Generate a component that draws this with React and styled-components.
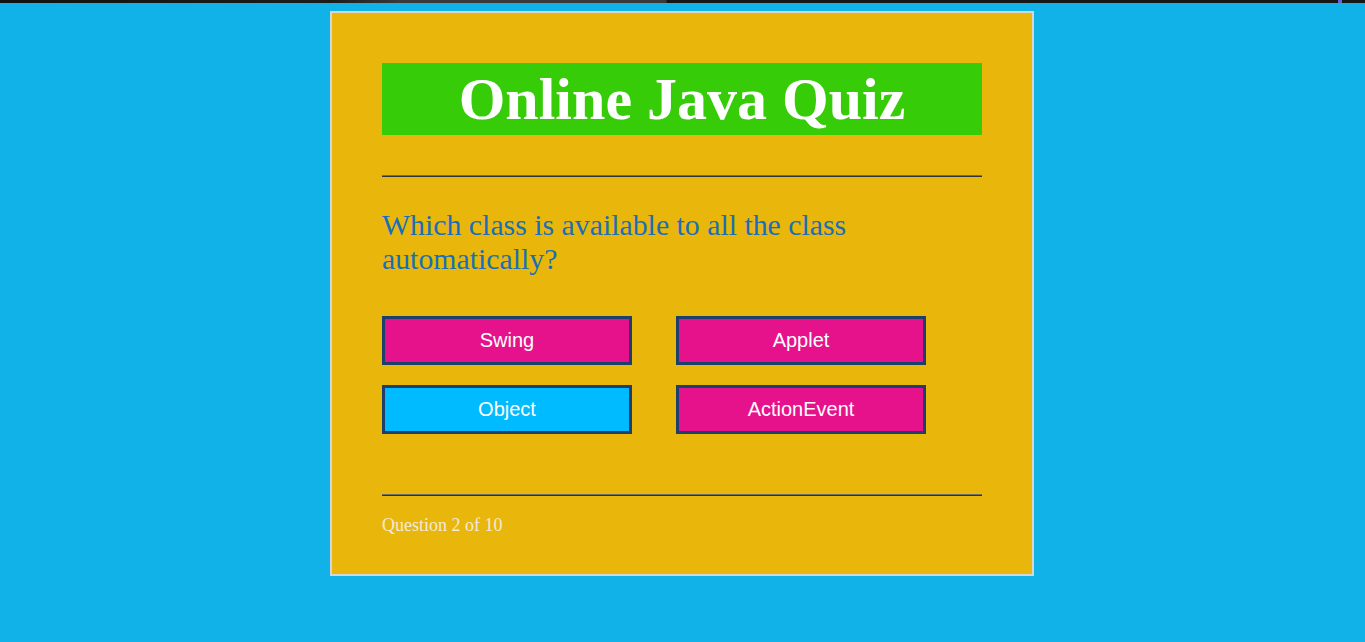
import styled, { createGlobalStyle } from 'styled-components';

const options = [
  { label: 'Swing', selected: false },
  { label: 'Applet', selected: false },
  { label: 'Object', selected: true },
  { label: 'ActionEvent', selected: false },
];

function App() {
  return (
    <>
      <GlobalStyle />
      <TopStrip />
      <Page>
        <QuizCard>
          <Title>Online Java Quiz</Title>
          <Rule />
          <Question>Which class is available to all the class automatically?</Question>
          <Options>
            {options.map((opt) => (
              <OptionButton key={opt.label} $selected={opt.selected}>
                {opt.label}
              </OptionButton>
            ))}
          </Options>
          <Rule $bottom />
          <Progress>Question 2 of 10</Progress>
        </QuizCard>
      </Page>
    </>
  );
}

const GlobalStyle = createGlobalStyle`
  html, body {
    margin: 0;
    padding: 0;
    background-color: #10b2e8;
  }
`;

const TopStrip = styled.div`
  height: 3px;
  background: linear-gradient(
    to right,
    #121212 0,
    #1c1c1c 330px,
    #3a3a3a 400px,
    #3a3a3a 666px,
    #161616 667px,
    #161616 1338px,
    #5a6bd8 1338px,
    #5a6bd8 1342px,
    #161616 1342px
  );
`;

const Page = styled.div`
  display: flex;
  justify-content: center;
  padding-top: 8px;
  padding-right: 1px;
`;

const QuizCard = styled.div`
  width: 600px;
  padding: 50px 50px 38px;
  background-color: #e9b70c;
  border: 2px solid #d6d6d6;
  display: flex;
  flex-direction: column;
`;

const Title = styled.h1`
  margin: 0;
  height: 72px;
  line-height: 72px;
  background-color: #36cc08;
  color: #ffffff;
  text-align: center;
  font-family: 'Liberation Serif', 'Times New Roman', serif;
  font-size: 60px;
  font-weight: bold;
`;

const Rule = styled.hr`
  width: 100%;
  margin: ${(p) => (p.$bottom ? '60px 0 0' : '40px 0 0')};
  border: none;
  border-top: 1px solid #6e6e6e;
  border-bottom: 1px solid #2c3444;
  height: 0;
`;

const Question = styled.p`
  margin: 31px 0 0;
  font-family: 'Liberation Serif', 'Times New Roman', serif;
  font-size: 29.8px;
  line-height: 34px;
  color: #1a6eb8;
`;

const Options = styled.div`
  display: grid;
  grid-template-columns: 250px 250px;
  column-gap: 44px;
  row-gap: 20px;
  margin-top: 40px;
`;

const OptionButton = styled.button`
  height: 49px;
  padding: 0;
  border: 3px solid #1d3f6b;
  background-color: ${(p) => (p.$selected ? '#00bbff' : '#e6128b')};
  color: #ffffff;
  font-family: 'Liberation Sans', Arial, sans-serif;
  font-size: 20px;
  cursor: pointer;
`;

const Progress = styled.div`
  margin-top: 19px;
  font-family: 'Liberation Serif', 'Times New Roman', serif;
  font-size: 18px;
  color: #f2ead8;
`;

export default App;
